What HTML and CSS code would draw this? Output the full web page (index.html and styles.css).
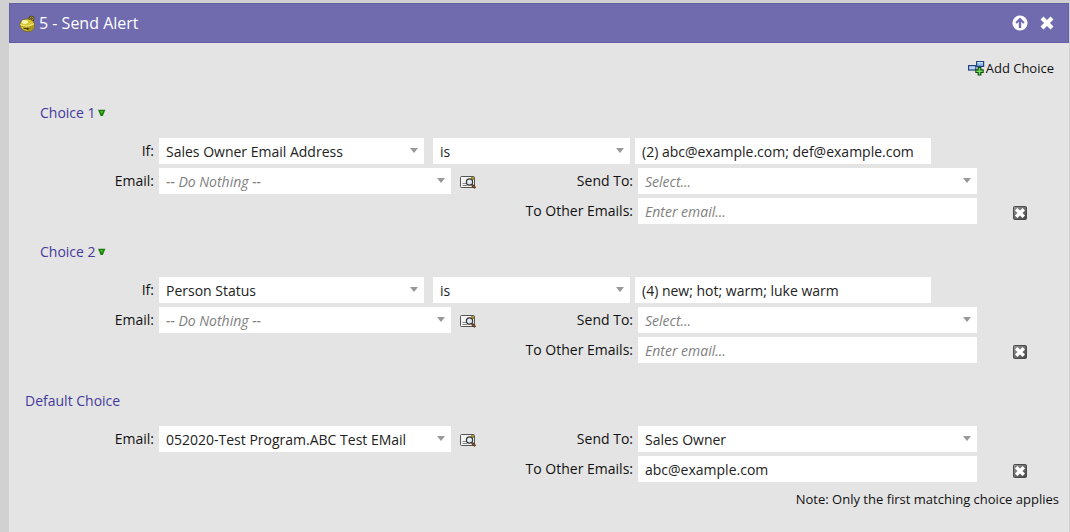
FILE: index.html
```html
<!DOCTYPE html>
<html lang="en">
<head>
  <meta charset="UTF-8">
  <meta name="viewport" content="width=device-width, initial-scale=1.0">
  <title>Send Alert</title>
  <link rel="stylesheet" href="styles.css">
</head>
<body>
  <!-- shared icons -->
  <svg class="sprites" width="0" height="0">
    <linearGradient id="greyFill" x1="0" y1="0" x2="1" y2="1">
      <stop offset="0" stop-color="#999"/>
      <stop offset="1" stop-color="#444"/>
    </linearGradient>
    <symbol id="icon-menu" viewBox="0 0 8 8">
      <path d="M0 0.8h7.4L4.8 7H2.6z" fill="#1c7a12"/>
      <path d="M2 2h3.4L3.7 5z" fill="#45c026"/>
    </symbol>
    <symbol id="icon-preview" viewBox="0 0 18 14">
      <rect x="1.5" y="1.5" width="14" height="11" rx="1" fill="#f3f3f3" stroke="#555"/>
      <path d="M3.5 8.5h4M3.5 10.5h5" stroke="#888"/>
      <rect x="12" y="2" width="3" height="3" fill="#a3952f"/>
      <circle cx="10.5" cy="7" r="3.1" fill="#dfe9ef" stroke="#333" stroke-width="1.2"/>
      <path d="M13 9.8l3.3 3.2" stroke="#3b1f10" stroke-width="2.4"/>
      <path d="M13.8 10.4l2.2 2.2" stroke="#d98a4a"/>
    </symbol>
    <symbol id="icon-delete" viewBox="0 0 14 14">
      <rect x="0.5" y="0.5" width="13" height="13" rx="1" fill="url(#greyFill)" stroke="#4a4a4a"/>
      <path d="M3.2 3.2l7.6 7.6M10.8 3.2l-7.6 7.6" stroke="#fff" stroke-width="3.4"/>
    </symbol>
  </svg>

  <section class="panel">
    <header class="panel-header">
      <svg class="bell" width="18" height="18" viewBox="0 0 18 18">
        <circle cx="12.5" cy="3.6" r="1.7" fill="none" stroke="#40380c" stroke-width="2.4"/>
        <circle cx="12.5" cy="3.6" r="1.7" fill="none" stroke="#c9b433"/>
        <path d="M1 9.5C1.2 6 4.5 3.8 8.5 4c4 0.2 6.7 2.4 6.9 6.2 0.2 3.8-2.4 6.4-6 6.4S0.8 14 1 9.5z" fill="#d9c530" stroke="#6b5e16" stroke-width="0.8"/>
        <path d="M9 16c4 0 6-2.6 6-6-2 2.2-6.4 2.8-9.2 2.6z" fill="#a8951f"/>
        <ellipse cx="5.8" cy="7" rx="3.2" ry="1.9" fill="#fbf6a8"/>
        <path d="M1.4 9.6c3 2 9.4 2.2 13.6-0.8" fill="none" stroke="#f4e977" stroke-width="1.2"/>
        <path d="M1.6 10.8c3 1.8 9.4 2 13.4-1" fill="none" stroke="#8f7d1c" stroke-width="0.6"/>
        <path d="M4.5 13.2l4 0.8" stroke="#332a08"/>
        <circle cx="8.8" cy="13.8" r="0.9" fill="#221c04"/>
      </svg>
      <h1>5 - Send Alert</h1>
      <button class="header-btn" type="button" aria-label="Move up">
        <svg width="16" height="16" viewBox="0 0 16 16">
          <circle cx="8" cy="8" r="7.6" fill="#fff"/>
          <path d="M8 2.6l4.6 4.6-1.4 1.5-2-1.9V13H6.8V6.8l-2 1.9-1.4-1.5z" fill="#706aaf"/>
        </svg>
      </button>
      <button class="header-btn" type="button" aria-label="Close">
        <svg width="14" height="14" viewBox="0 0 14 14">
          <path d="M2 2l10 10M12 2L2 12" stroke="#fff" stroke-width="4.2"/>
        </svg>
      </button>
    </header>

    <div class="toolbar">
      <button class="add-choice" type="button">
        <svg width="18" height="16" viewBox="0 0 18 16">
          <rect x="0.6" y="5.6" width="7.2" height="4.4" fill="#bcd8f7" stroke="#24447c" stroke-width="1.2"/>
          <rect x="8.6" y="1.6" width="7" height="4.8" fill="#8fbcf0" stroke="#24447c" stroke-width="1.2"/>
          <path d="M9.2 2.7H15" stroke="#e3f0fd"/>
          <path d="M11.5 7v8.4M7.3 11.2h8.4" stroke="#0c4a10" stroke-width="3.8"/>
          <path d="M11.5 8v6.4M8.3 11.2h6.4" stroke="#6fdc5c" stroke-width="1.6"/>
        </svg>Add Choice
      </button>
    </div>

    <section class="choice">
      <h2><button type="button">Choice 1<svg width="8" height="8"><use href="#icon-menu"/></svg></button></h2>
      <div class="condition">
        <label for="field1">If:</label>
        <div class="select"><select id="field1"><option>Sales Owner Email Address</option></select></div>
        <div class="select operator"><select aria-label="Operator"><option>is</option></select></div>
        <input type="text" aria-label="Values" value="(2) abc@example.com; def@example.com">
      </div>
      <div class="action">
        <label for="email1">Email:</label>
        <div class="select empty"><select id="email1"><option>-- Do Nothing --</option></select></div>
        <div class="middle">
          <button type="button" aria-label="Preview"><svg width="18" height="14"><use href="#icon-preview"/></svg></button>
          <label for="to1">Send To:</label>
        </div>
        <div class="select empty"><select id="to1"><option>Select...</option></select></div>
      </div>
      <div class="action">
        <label class="other" for="other1">To Other Emails:</label>
        <input id="other1" type="text" placeholder="Enter email...">
        <button class="delete" type="button" aria-label="Delete"><svg width="14" height="14"><use href="#icon-delete"/></svg></button>
      </div>
    </section>

    <section class="choice">
      <h2><button type="button">Choice 2<svg width="8" height="8"><use href="#icon-menu"/></svg></button></h2>
      <div class="condition">
        <label for="field2">If:</label>
        <div class="select"><select id="field2"><option>Person Status</option></select></div>
        <div class="select operator"><select aria-label="Operator"><option>is</option></select></div>
        <input type="text" aria-label="Values" value="(4) new; hot; warm; luke warm">
      </div>
      <div class="action">
        <label for="email2">Email:</label>
        <div class="select empty"><select id="email2"><option>-- Do Nothing --</option></select></div>
        <div class="middle">
          <button type="button" aria-label="Preview"><svg width="18" height="14"><use href="#icon-preview"/></svg></button>
          <label for="to2">Send To:</label>
        </div>
        <div class="select empty"><select id="to2"><option>Select...</option></select></div>
      </div>
      <div class="action">
        <label class="other" for="other2">To Other Emails:</label>
        <input id="other2" type="text" placeholder="Enter email...">
        <button class="delete" type="button" aria-label="Delete"><svg width="14" height="14"><use href="#icon-delete"/></svg></button>
      </div>
    </section>

    <section class="choice default">
      <h2>Default Choice</h2>
      <div class="action">
        <label for="email3">Email:</label>
        <div class="select"><select id="email3"><option>052020-Test Program.ABC Test EMail</option></select></div>
        <div class="middle">
          <button type="button" aria-label="Preview"><svg width="18" height="14"><use href="#icon-preview"/></svg></button>
          <label for="to3">Send To:</label>
        </div>
        <div class="select"><select id="to3"><option>Sales Owner</option></select></div>
      </div>
      <div class="action">
        <label class="other" for="other3">To Other Emails:</label>
        <input id="other3" type="text" value="abc@example.com">
        <button class="delete" type="button" aria-label="Delete"><svg width="14" height="14"><use href="#icon-delete"/></svg></button>
      </div>
    </section>

    <p class="note">Note: Only the first matching choice applies</p>
  </section>
</body>
</html>
```

FILE: styles.css
```css
* {
    box-sizing: border-box;
}

body {
    margin: 0;
    padding: 3px 1px 0 9px;
    min-height: 100vh;
    display: flex;
    background: #d1d1d1;
    color: #111;
    font-family: "Open Sans", "Noto Sans", sans-serif;
    font-size: 14px;
    line-height: 20px;
}

.sprites {
    position: absolute;
}

button {
    padding: 0;
    border: none;
    background: none;
    color: inherit;
    font: inherit;
    cursor: pointer;
}

svg {
    display: block;
}

.panel {
    flex: 1;
    background: #e4e4e4;
}

.panel-header {
    display: flex;
    align-items: center;
    height: 40px;
    padding: 0 14px 0 9px;
    background: #706aaf;
    border: 1px solid #655fa3;
    color: #fff;
}

.panel-header h1 {
    flex: 1;
    margin: 0 0 0 2px;
    font-size: 16px;
    font-weight: normal;
}

.bell {
    margin-top: 2px;
}

.header-btn {
    margin-left: 12px;
}

.toolbar {
    display: flex;
    justify-content: flex-end;
    padding: 15px 15px 0 0;
}

.add-choice {
    display: flex;
    align-items: center;
    font-size: 13px;
    line-height: 20px;
}

.choice {
    padding-top: 25px;
}

.choice + .choice {
    padding-top: 14px;
}

.choice h2 {
    margin: 0 0 15px 31px;
    color: #453a9c;
    font-size: 14px;
    font-weight: normal;
}

.choice h2 button {
    display: flex;
    align-items: center;
    gap: 2px;
}

.choice + .default {
    padding-top: 24px;
}

.default h2 {
    margin-left: 16px;
}

.condition,
.action {
    display: grid;
    column-gap: 5px;
    align-items: center;
    margin-bottom: 4px;
}

.condition {
    grid-template-columns: 145px 265fr 201fr 296fr 133px;
}

.action {
    grid-template-columns: 145px 292fr 177px 339fr 87px;
}

label {
    text-align: right;
}

.middle {
    display: flex;
    justify-content: space-between;
    padding-left: 3px;
}

.middle button {
    padding-top: 2px;
}

.other {
    grid-column: 3;
}

.select {
    position: relative;
}

.select::after {
    content: "";
    position: absolute;
    top: 10px;
    right: 6px;
    border: 4px solid transparent;
    border-top: 5px solid #999;
    border-bottom: none;
    pointer-events: none;
}

.operator {
    margin-left: 4px;
}

select,
input {
    display: block;
    appearance: none;
    width: 100%;
    height: 26px;
    padding: 0 7px;
    border: none;
    border-radius: 0;
    background: #fff;
    color: #222;
    font: inherit;
}

select {
    padding-top: 2px;
}

.empty select,
input::placeholder {
    color: #808080;
    font-style: italic;
    opacity: 1;
}

.delete {
    justify-self: start;
    margin: 4px 0 0 31px;
}

.note {
    margin: 0;
    padding: 3px 10px 0 0;
    font-size: 13px;
    text-align: right;
}
```
